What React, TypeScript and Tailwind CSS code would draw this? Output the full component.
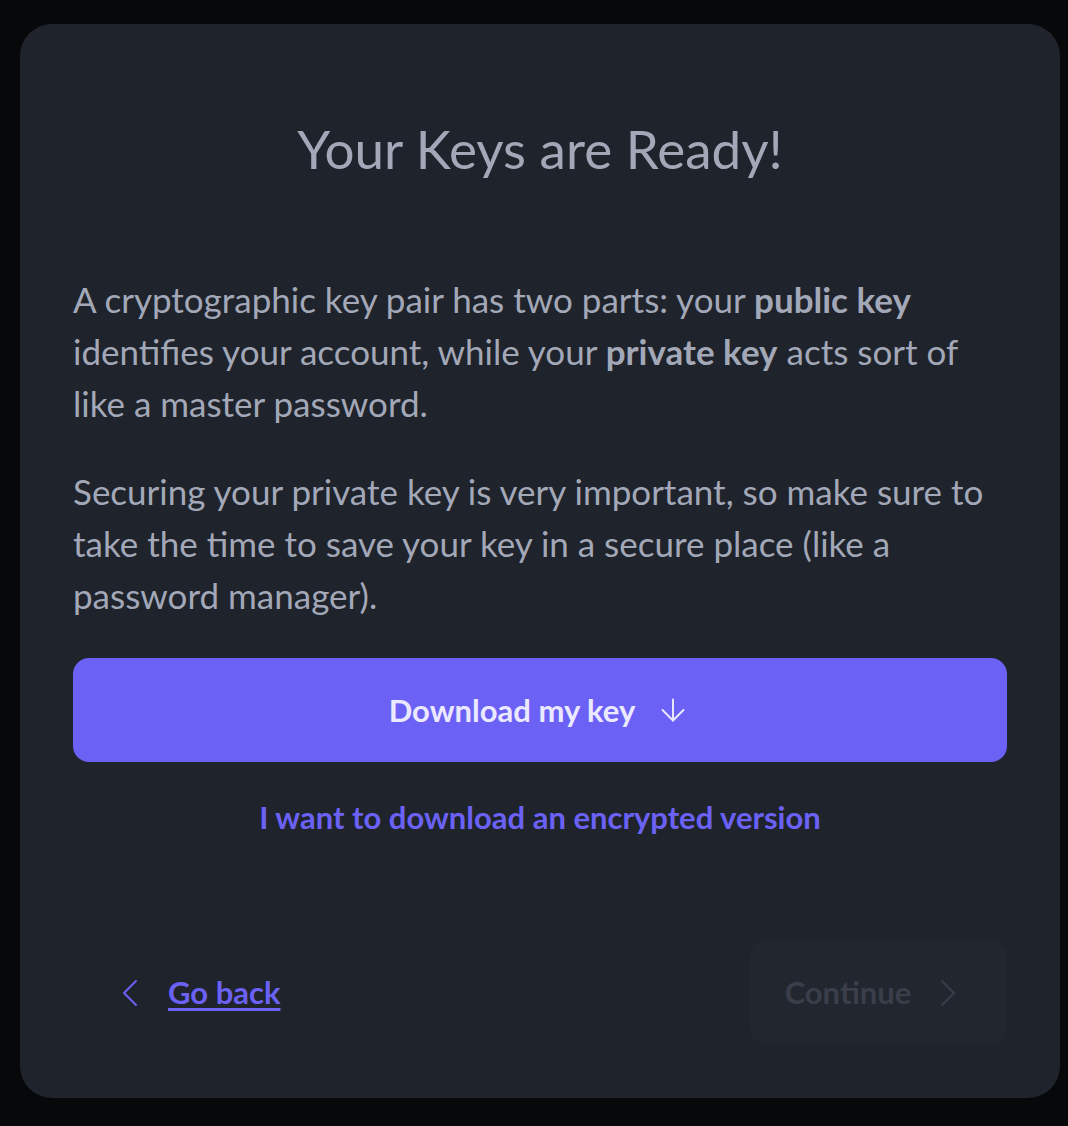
import { ArrowDown, ChevronLeft, ChevronRight } from "lucide-react";

export default function App() {
  return (
    <div
      className="min-h-[1126px] w-full bg-[#07080a] pl-[20px] pr-[8px] pt-[24px] pb-[28px]"
      style={{ fontFamily: "Lato, 'Noto Sans', sans-serif" }}
    >
      <div className="flex h-[1074px] flex-col rounded-[32px] bg-[#1f232b] px-[53px] pt-[93px] pb-[53px]">
        <h1 className="text-center text-[53px] leading-[64px] text-[#a3a8b8]">
          Your Keys are Ready!
        </h1>

        <div className="mt-[92px] text-[35px] leading-[52px] text-[#a3a8b8]">
          <p>
            A cryptographic key pair has two parts: your{" "}
            <span className="font-bold">public key</span> identifies your
            account, while your <span className="font-bold">private key</span>{" "}
            acts sort of like a master password.
          </p>
          <p className="mt-[36px]">
            Securing your private key is very important, so make sure to take
            the time to save your key in a secure place (like a password
            manager).
          </p>
        </div>

        <button className="mt-[37px] flex h-[104px] w-full items-center justify-center gap-[20px] rounded-[16px] bg-[#6b62f5] text-[31px] font-bold text-[#ebe9ff]">
          Download my key
          <ArrowDown className="h-[36px] w-[36px]" strokeWidth={1.3} />
        </button>

        <a className="mt-[32px] text-center text-[31px] font-bold text-[#6b62f5]">
          I want to download an encrypted version
        </a>

        <div className="mt-auto flex items-center justify-between">
          <a className="ml-[33px] flex items-center gap-[14px] text-[31px] font-bold text-[#6b62f5]">
            <ChevronLeft className="h-[48px] w-[48px]" strokeWidth={1} />
            <span className="underline underline-offset-[4px]">Go back</span>
          </a>
          <button className="flex h-[105px] w-[257px] items-center justify-center gap-[13px] rounded-[16px] bg-[#22262e] text-[31px] font-bold text-[#3a3e4a]">
            Continue
            <ChevronRight className="h-[48px] w-[48px]" strokeWidth={1} />
          </button>
        </div>
      </div>
    </div>
  );
}
